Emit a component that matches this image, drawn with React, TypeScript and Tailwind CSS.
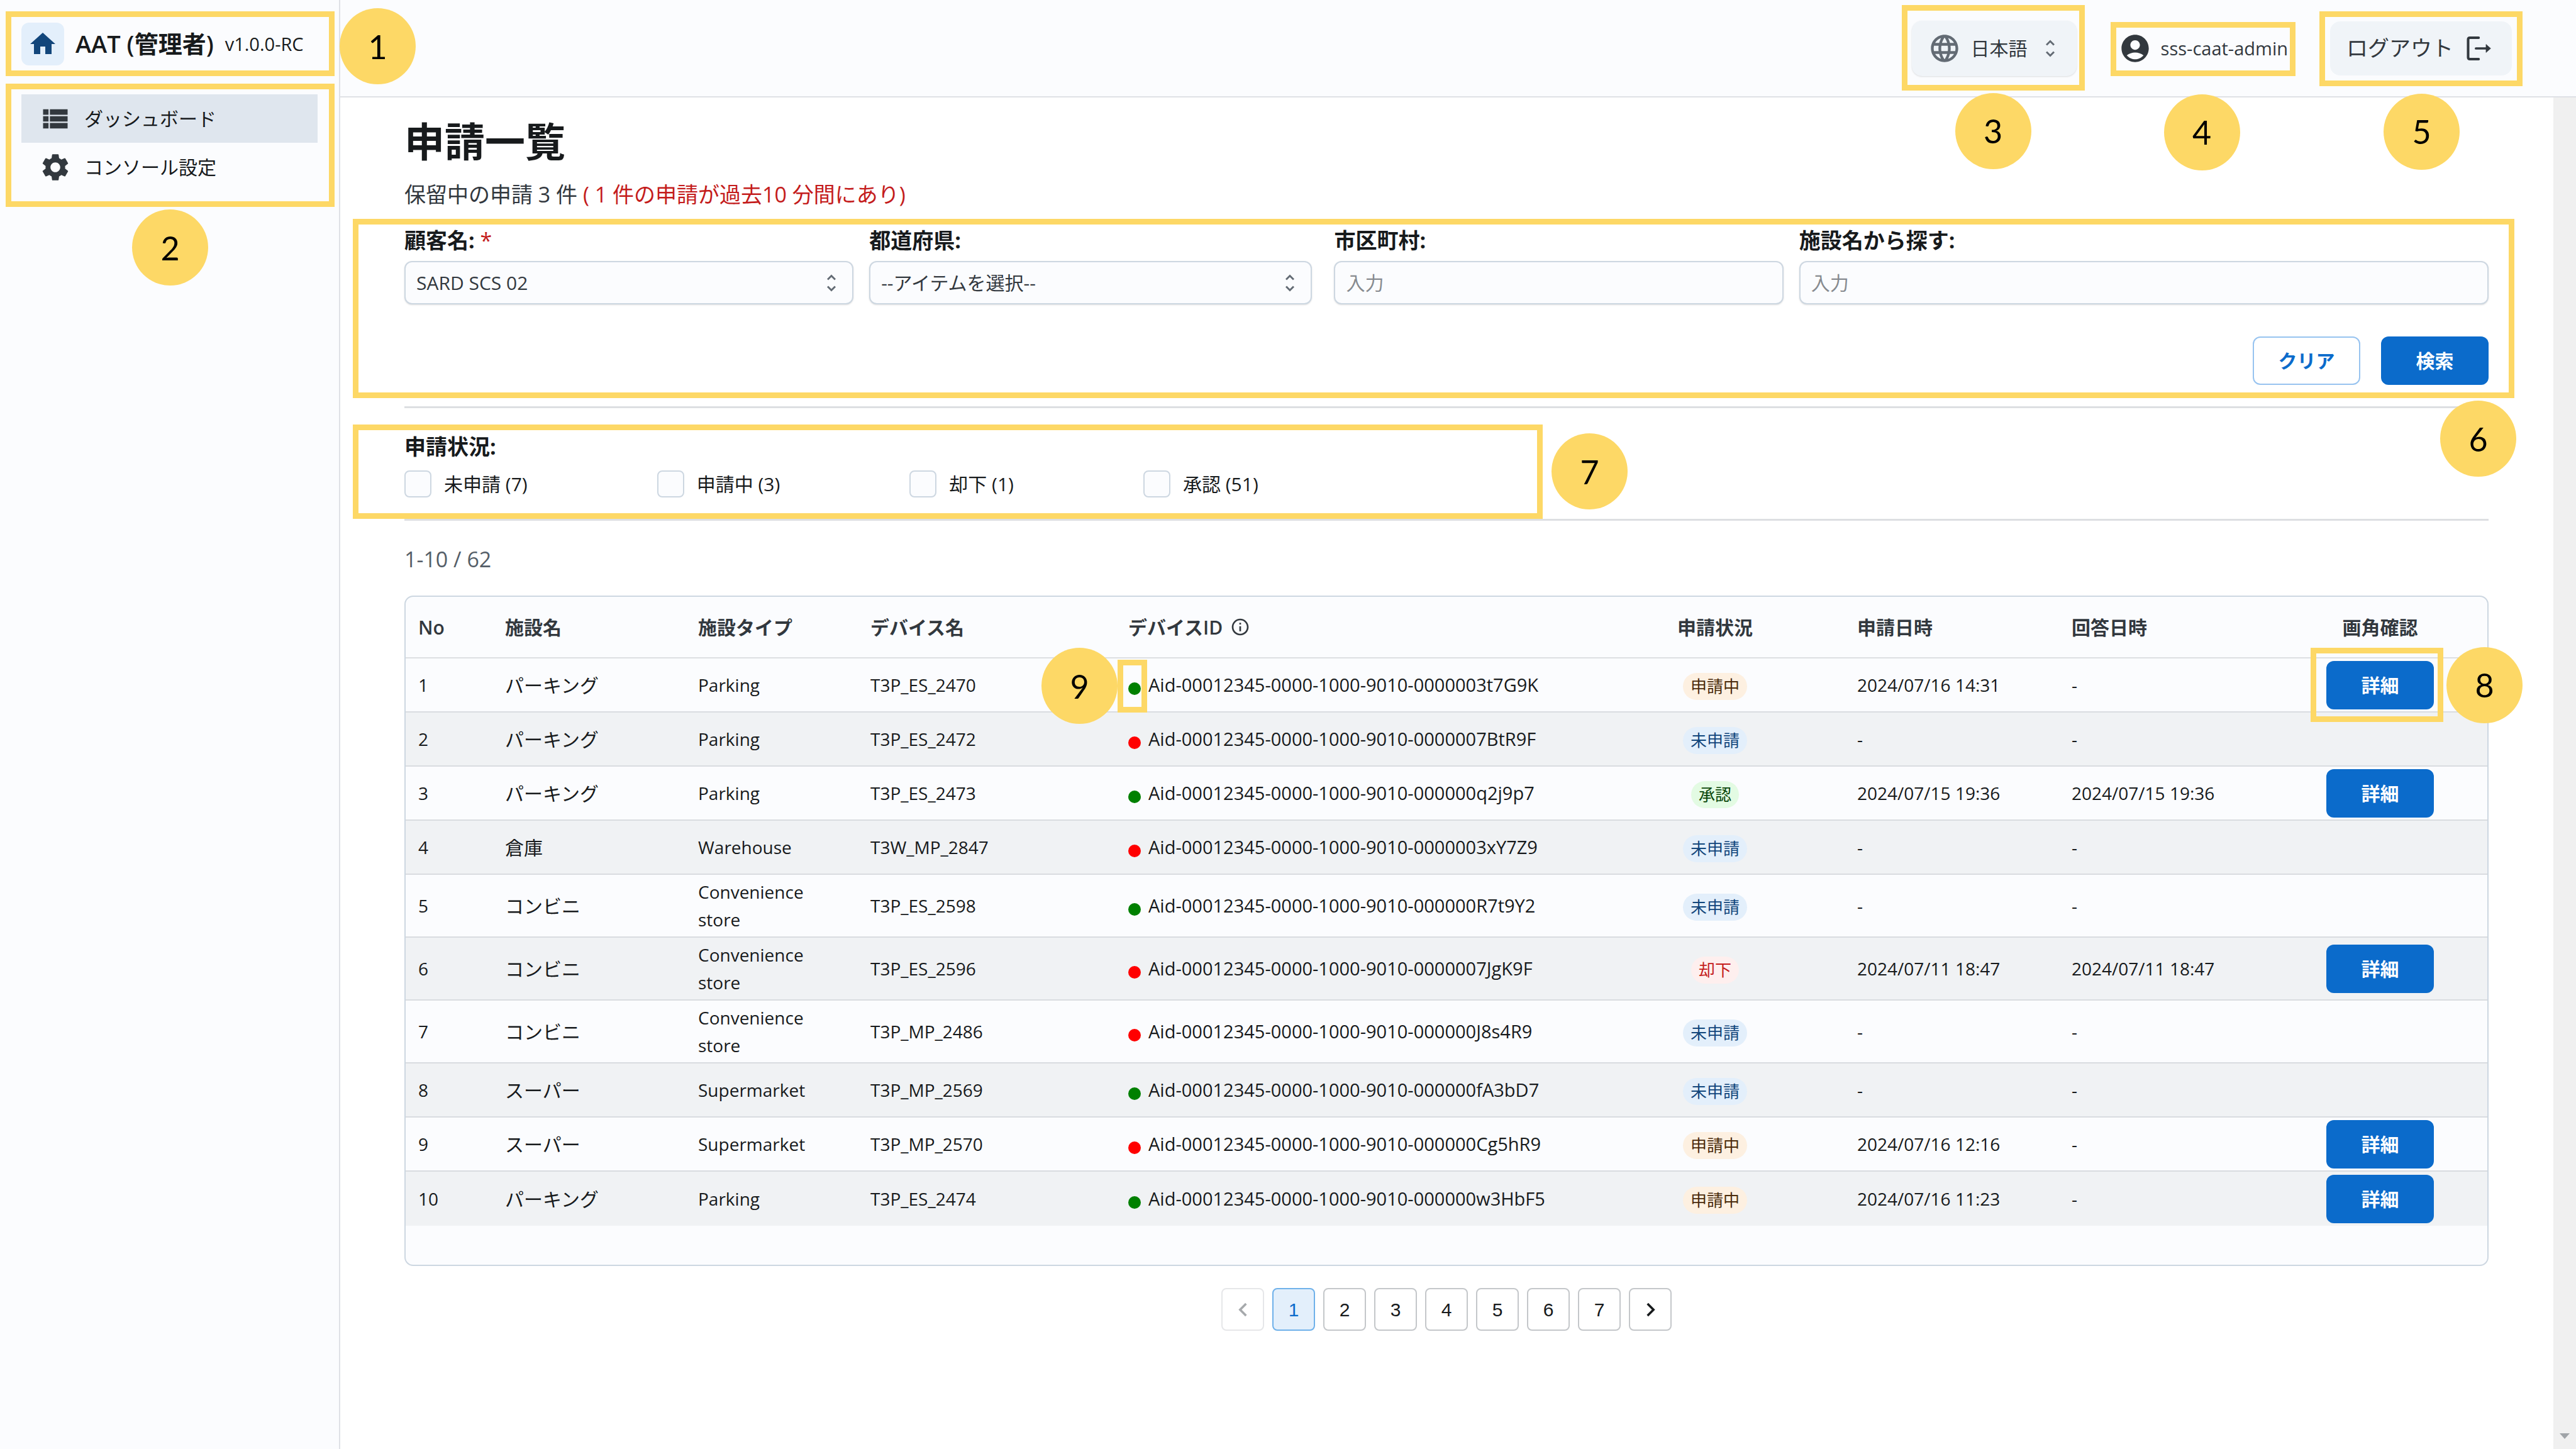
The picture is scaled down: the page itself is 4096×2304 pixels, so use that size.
import React from "react";
import {
  MdAccountCircle,
  MdChevronLeft,
  MdChevronRight,
  MdHome,
  MdLanguage,
  MdOutlineInfo,
  MdSettings,
  MdViewList,
} from "react-icons/md";

/* ---------- annotation marks ---------- */

function Frame({ className }: { className: string }) {
  return (
    <span
      aria-hidden="true"
      className={`pointer-events-none absolute z-10 border-[9px] border-[#fdd866] ${className}`}
    />
  );
}

function Marker({ n, className }: { n: number; className: string }) {
  return (
    <span
      className={`pointer-events-none absolute z-20 flex size-[121px] items-center justify-center rounded-full bg-[#fdd866] font-['Lato',sans-serif] text-[52px] leading-none font-normal text-black ${className}`}
    >
      {n}
    </span>
  );
}

/* ---------- small drawings ---------- */

function SortCarets({ className }: { className: string }) {
  return (
    <svg
      viewBox="0 0 14 28"
      fill="none"
      stroke="#636b74"
      strokeWidth="3"
      className={`pointer-events-none absolute top-1/2 h-7 w-3.5 -translate-y-1/2 ${className}`}
    >
      <path d="M1 8.5 7 2.5l6 6M1 19.5l6 6 6-6" />
    </svg>
  );
}

function ExitIcon() {
  return (
    <svg viewBox="0 0 126 128" className="h-10 w-[39px]" fill="none" stroke="#32383e">
      <path d="M62 9H17q-9 0-9 9v92q0 9 9 9h45" strokeWidth="13" strokeLinecap="round" />
      <path d="M48 64h54" strokeWidth="12" strokeLinecap="round" />
      <path d="M100 43v42l24-21z" fill="#32383e" strokeWidth="2" strokeLinejoin="round" />
    </svg>
  );
}

/* ---------- data ---------- */

type Status = "申請中" | "未申請" | "承認" | "却下";

type Row = {
  name: string;
  type: string;
  device: string;
  online: boolean;
  id: string;
  status: Status;
  requested: string;
  answered: string;
  detail: boolean;
};

const rows: Row[] = [
  { name: "パーキング", type: "Parking", device: "T3P_ES_2470", online: true, id: "Aid-00012345-0000-1000-9010-0000003t7G9K", status: "申請中", requested: "2024/07/16 14:31", answered: "-", detail: true },
  { name: "パーキング", type: "Parking", device: "T3P_ES_2472", online: false, id: "Aid-00012345-0000-1000-9010-0000007BtR9F", status: "未申請", requested: "-", answered: "-", detail: false },
  { name: "パーキング", type: "Parking", device: "T3P_ES_2473", online: true, id: "Aid-00012345-0000-1000-9010-000000q2j9p7", status: "承認", requested: "2024/07/15 19:36", answered: "2024/07/15 19:36", detail: true },
  { name: "倉庫", type: "Warehouse", device: "T3W_MP_2847", online: false, id: "Aid-00012345-0000-1000-9010-0000003xY7Z9", status: "未申請", requested: "-", answered: "-", detail: false },
  { name: "コンビニ", type: "Convenience store", device: "T3P_ES_2598", online: true, id: "Aid-00012345-0000-1000-9010-000000R7t9Y2", status: "未申請", requested: "-", answered: "-", detail: false },
  { name: "コンビニ", type: "Convenience store", device: "T3P_ES_2596", online: false, id: "Aid-00012345-0000-1000-9010-0000007JgK9F", status: "却下", requested: "2024/07/11 18:47", answered: "2024/07/11 18:47", detail: true },
  { name: "コンビニ", type: "Convenience store", device: "T3P_MP_2486", online: false, id: "Aid-00012345-0000-1000-9010-000000J8s4R9", status: "未申請", requested: "-", answered: "-", detail: false },
  { name: "スーパー", type: "Supermarket", device: "T3P_MP_2569", online: true, id: "Aid-00012345-0000-1000-9010-000000fA3bD7", status: "未申請", requested: "-", answered: "-", detail: false },
  { name: "スーパー", type: "Supermarket", device: "T3P_MP_2570", online: false, id: "Aid-00012345-0000-1000-9010-000000Cg5hR9", status: "申請中", requested: "2024/07/16 12:16", answered: "-", detail: true },
  { name: "パーキング", type: "Parking", device: "T3P_ES_2474", online: true, id: "Aid-00012345-0000-1000-9010-000000w3HbF5", status: "申請中", requested: "2024/07/16 11:23", answered: "-", detail: true },
];

const statusStyle: Record<Status, string> = {
  申請中: "bg-[#fdf0e1] text-[#4a2b0b]",
  未申請: "bg-[#e3effb] text-[#12467b]",
  承認: "bg-[#e3fbe3] text-[#0a470a]",
  却下: "bg-[#feefee] text-[#c41c1c]",
};

const statusFilters = ["未申請 (7)", "申請中 (3)", "却下 (1)", "承認 (51)"];

const field =
  "h-[69px] w-full appearance-none rounded-[12px] border-2 border-[#cdd7e1] bg-[#fbfcfe] px-[17px] text-[30px] shadow-sm";

/* ---------- page parts ---------- */

function Sidebar() {
  return (
    <aside className="w-[541px] shrink-0 border-r-2 border-[#dfe1e6] bg-[#fbfcfe] pt-[18px] pr-[7px] pl-[9px]">
      <div className="relative flex h-[103px] items-center pl-[25px] font-semibold text-[#171a1c]">
        <button
          type="button"
          aria-label="ホーム"
          className="flex size-[68px] items-center justify-center rounded-[12px] bg-[#e3effb]"
        >
          <MdHome className="size-12 text-[#12467b]" />
        </button>
        <span className="ml-[18px] text-[38px] whitespace-nowrap">AAT (管理者)</span>
        <span className="ml-[18px] text-[29px] font-medium whitespace-nowrap">v1.0.0-RC</span>
        <Frame className="inset-0" />
        <Marker n={1} className="-top-[5px] left-[531px]" />
      </div>
      <nav className="relative mt-3 pt-[17px] pr-[27px] pb-[25px] pl-[25px] text-[30px] text-[#171a1c]">
        <a href="#dashboard" aria-current="page" className="flex h-[77px] items-center gap-5 bg-[#dfe6ee] pl-7">
          <MdViewList className="size-[52px] text-[#32383e]" />
          ダッシュボード
        </a>
        <a href="#console" className="flex h-[77px] items-center gap-5 pl-7">
          <MdSettings className="size-[52px] text-[#32383e]" />
          コンソール設定
        </a>
        <Frame className="inset-0" />
        <Marker n={2} className="top-[200px] left-[201px]" />
      </nav>
    </aside>
  );
}

function Header() {
  return (
    <header className="flex h-[155px] items-center justify-end gap-[67px] border-b-2 border-[#dfe1e6] bg-[#fbfcfe] pr-[102px] text-[#32383e]">
      <div className="relative">
        <MdLanguage className="pointer-events-none absolute top-[18px] left-[26px] size-[52px] text-[#636b74]" />
        <select
          aria-label="言語"
          className="h-[88px] w-[262px] appearance-none rounded-2xl bg-[#f0f4f8] pl-[94px] text-[30px] shadow-sm"
        >
          <option>日本語</option>
        </select>
        <SortCarets className="right-[35px]" />
        <Frame className="-top-[25px] -right-[13px] -bottom-[23px] -left-[16px]" />
        <Marker n={3} className="top-[115px] left-[69px]" />
      </div>
      <div className="relative flex items-center gap-[15px]">
        <MdAccountCircle className="size-[52px]" />
        <span className="text-[29px]">sss-caat-admin</span>
        <Frame className="-top-[16px] -right-[12px] -bottom-[18px] -left-[13px]" />
        <Marker n={4} className="top-[99px] left-[72px]" />
      </div>
      <div className="relative">
        <button
          type="button"
          className="flex h-[86px] w-[289px] items-center justify-between rounded-2xl bg-[#f0f4f8] pr-[33px] pl-[26px] text-[34px]"
        >
          ログアウト
          <ExitIcon />
        </button>
        <Frame className="-top-[16px] -right-[17px] -bottom-[17px] -left-[17px]" />
        <Marker n={5} className="top-[115px] left-[85px]" />
      </div>
    </header>
  );
}

function SearchFilters() {
  const label = "block text-[34px] leading-[44px] font-bold text-[#171a1c] mb-[11px]";
  return (
    <section className="relative mt-[27px]">
      <div className="grid grid-cols-[714fr_714fr_714fr_1096fr] gap-[25px]">
        <div>
          <label htmlFor="customer" className={label}>
            顧客名: <span className="font-normal text-[#c41c1c]">*</span>
          </label>
          <div className="relative">
            <select id="customer" className={`${field} text-[#32383e]`}>
              <option>SARD SCS 02</option>
            </select>
            <SortCarets className="right-7" />
          </div>
        </div>
        <div>
          <label htmlFor="prefecture" className={label}>
            都道府県:
          </label>
          <div className="relative mr-2.5">
            <select id="prefecture" className={`${field} text-[#32383e]`}>
              <option>--アイテムを選択--</option>
            </select>
            <SortCarets className="right-7" />
          </div>
        </div>
        <div>
          <label htmlFor="city" className={label}>
            市区町村:
          </label>
          <input id="city" type="text" placeholder="入力" className={`${field} placeholder:text-[#868a8f]`} />
        </div>
        <div>
          <label htmlFor="facility" className={label}>
            施設名から探す:
          </label>
          <input id="facility" type="text" placeholder="入力" className={`${field} placeholder:text-[#868a8f]`} />
        </div>
      </div>
      <div className="mt-[51px] flex justify-end gap-[33px] text-[30px] font-bold">
        <button
          type="button"
          className="h-[77px] w-[171px] rounded-[12px] border-2 border-[#97c3f0] bg-white text-[#0b6bcb]"
        >
          クリア
        </button>
        <button type="button" className="h-[77px] w-[171px] rounded-[12px] bg-[#0b6bcb] text-white">
          検索
        </button>
      </div>
      <Frame className="-top-[12px] -right-[41px] -bottom-[21px] -left-[82px]" />
      <Marker n={6} className="top-[277px] -right-[44px]" />
    </section>
  );
}

function StatusFilters() {
  return (
    <section role="group" aria-labelledby="status-title" className="relative mt-[39px]">
      <h2 id="status-title" className="text-[34px] leading-[44px] font-bold text-[#171a1c]">
        申請状況:
      </h2>
      <div className="mt-4 flex gap-[206px]">
        {statusFilters.map((text) => (
          <label key={text} className="flex h-[43px] items-center gap-5 text-[30px] text-[#171a1c]">
            <input
              type="checkbox"
              className="size-[43px] appearance-none rounded-[8px] border-2 border-[#cdd7e1] bg-[#fbfcfe]"
            />
            {text}
          </label>
        ))}
      </div>
      <Frame className="-top-[13px] -bottom-[34px] -left-[82px] w-[1892px]" />
      <Marker n={7} className="top-px left-[1824px]" />
    </section>
  );
}

function RequestTable() {
  const cell = "px-5";
  return (
    <div className="mt-9 rounded-[14px] border-2 border-[#cdd7e1] bg-[#fbfcfe] pb-[62px]">
      <table className="w-full table-fixed border-separate border-spacing-0 text-left text-[28px] text-[#171a1c]">
        <colgroup>
          <col className="w-[138px]" />
          <col className="w-[307px]" />
          <col className="w-[274px]" />
          <col className="w-[410px]" />
          <col className="w-[747px]" />
          <col className="w-[412px]" />
          <col className="w-[341px]" />
          <col className="w-[340px]" />
          <col className="w-[341px]" />
        </colgroup>
        <thead className="text-[30px] text-[#32383e] [&_th]:border-b-2 [&_th]:border-[#dddfe2] [&_th]:font-semibold">
          <tr className="h-[98px]">
            <th className={cell}>No</th>
            <th className={cell}>施設名</th>
            <th className={cell}>施設タイプ</th>
            <th className={cell}>デバイス名</th>
            <th className={cell}>
              <span className="flex items-center gap-3">
                デバイスID
                <MdOutlineInfo className="size-8" />
              </span>
            </th>
            <th className="px-5 text-center">申請状況</th>
            <th className={cell}>申請日時</th>
            <th className={cell}>回答日時</th>
            <th className="px-5 text-center">画角確認</th>
          </tr>
        </thead>
        <tbody className="[&_td]:border-b-2 [&_td]:border-[#d9dce0] [&_tr:last-child_td]:border-b-0">
          {rows.map((row, i) => (
            <tr key={row.id} className="h-[86px] even:bg-[#f0f2f4]">
              <td className={cell}>{i + 1}</td>
              <td className="px-5 text-[30px]">{row.name}</td>
              <td className="py-[5px] pr-10 pl-5 leading-[44px]">{row.type}</td>
              <td className={cell}>{row.device}</td>
              <td className="px-5 text-[29px]">
                <span className="flex items-center gap-3">
                  <span
                    className={`relative mt-3 size-5 shrink-0 rounded-full ${row.online ? "bg-[#008000]" : "bg-[#ff0000]"}`}
                  >
                    {i === 0 && (
                      <>
                        <Frame className="-top-[36px] -right-[10px] -bottom-[28px] -left-[17px]" />
                        <Marker n={9} className="-top-[55px] -left-[138px]" />
                      </>
                    )}
                  </span>
                  {row.id}
                </span>
              </td>
              <td className="px-5 pt-1 text-center">
                <span
                  className={`inline-flex h-[43px] items-center rounded-full px-3 text-[26px] ${statusStyle[row.status]}`}
                >
                  {row.status}
                </span>
              </td>
              <td className={cell}>{row.requested}</td>
              <td className={cell}>{row.answered}</td>
              <td className="px-5 text-center">
                {row.detail && (
                  <span className="relative inline-block align-middle">
                    <button
                      type="button"
                      className="block h-[77px] w-[171px] rounded-[12px] bg-[#0b6bcb] text-[30px] font-bold text-white"
                    >
                      詳細
                    </button>
                    {i === 0 && (
                      <>
                        <Frame className="-top-[21px] -right-[15px] -bottom-[20px] -left-[25px]" />
                        <Marker n={8} className="-top-[22px] left-[191px]" />
                      </>
                    )}
                  </span>
                )}
              </td>
            </tr>
          ))}
        </tbody>
      </table>
    </div>
  );
}

function Pagination() {
  const base = "flex size-[68px] items-center justify-center rounded-[8px] border-2";
  return (
    <nav
      aria-label="ページ"
      className="mt-[35px] flex justify-center gap-[13px] font-['Liberation_Sans',sans-serif] text-[30px] text-[#171a1c]"
    >
      <button type="button" disabled aria-label="前へ" className={`${base} border-[#e6e7e9] text-[#a6a9ac]`}>
        <MdChevronLeft className="size-[43px]" />
      </button>
      {[1, 2, 3, 4, 5, 6, 7].map((n) => (
        <button
          key={n}
          type="button"
          className={`${base} ${n === 1 ? "border-[#6fb1ea] bg-[#e3effb] text-[#0b6bcb]" : "border-[#c4c7ca]"}`}
        >
          {n}
        </button>
      ))}
      <button type="button" aria-label="次へ" className={`${base} border-[#c4c7ca]`}>
        <MdChevronRight className="size-[43px]" />
      </button>
    </nav>
  );
}

export default function App() {
  return (
    <div
      lang="ja"
      className="flex min-h-screen bg-white font-['Open_Sans','Noto_Sans_CJK_JP',sans-serif] leading-normal"
    >
      <Sidebar />
      <div className="flex min-w-0 flex-1 flex-col">
        <Header />
        <div className="flex flex-1">
          <main className="min-w-0 flex-1 pt-[30px] pr-[103px] pl-[102px]">
            <h1 className="text-[64px] leading-[80px] font-bold text-[#171a1c]">申請一覧</h1>
            <p className="mt-5 text-[34px] leading-[48px] text-[#32383e]">
              保留中の申請 3 件 <span className="text-[#c41c1c]">( 1 件の申請が過去10 分間にあり)</span>
            </p>
            <SearchFilters />
            <hr className="mt-[34px] border-t-[3px] border-[#dddfe2]" />
            <StatusFilters />
            <hr className="mt-[34px] border-t-[3px] border-[#dddfe2]" />
            <p className="mt-[39px] text-[34px] leading-[44px] text-[#555e68]">1-10 / 62</p>
            <RequestTable />
            <Pagination />
          </main>
          <div aria-hidden="true" className="flex w-9 shrink-0 flex-col items-center justify-end bg-[#f0f0f0] pb-4">
            <svg viewBox="0 0 16 9" className="h-[9px] w-4" fill="#a0a4a8">
              <path d="M0 0h16L8 9z" />
            </svg>
          </div>
        </div>
      </div>
    </div>
  );
}
